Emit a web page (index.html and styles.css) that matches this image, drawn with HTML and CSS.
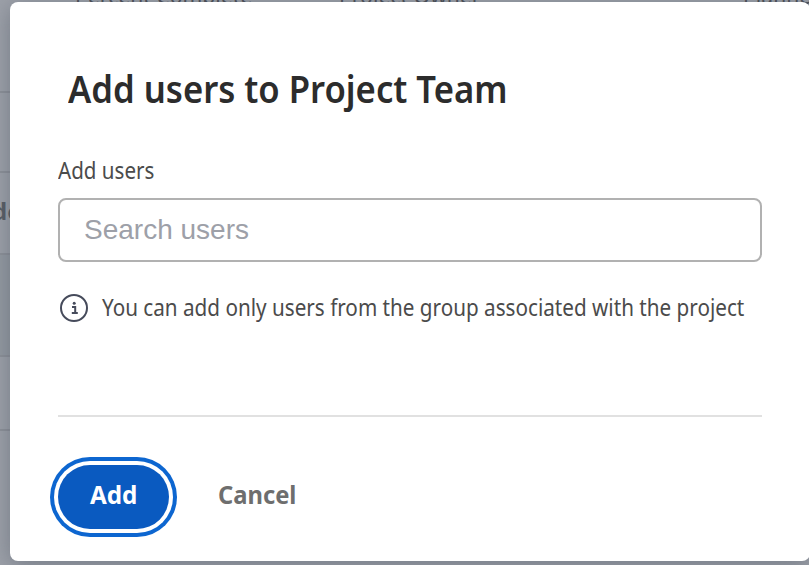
FILE: index.html
```html
<!DOCTYPE html>
<html lang="en">
<head>
<meta charset="utf-8">
<title>Add users to Project Team</title>
<link rel="stylesheet" href="styles.css">
</head>
<body>
<div class="page">
  <div class="columns"><span>Percent Complete</span><span>Project Owner</span><span>Planned</span></div>
  <div class="row row-a"></div>
  <div class="row row-b"></div>
  <div class="row row-c">de</div>
  <div class="row row-d"></div>
  <div class="row row-e"></div>
</div>
<main class="dialog" role="dialog" aria-labelledby="title">
  <h1 id="title"><span class="fit fit-title">Add users to Project Team</span></h1>
  <label for="users"><span class="fit fit-label">Add users</span></label>
  <input id="users" type="text" placeholder="Search users">
  <p class="info">
    <svg width="28" height="28" viewBox="0 0 28 28" fill="none" aria-hidden="true">
      <circle cx="14" cy="14" r="13" stroke="#464b5b" stroke-width="2"/>
      <circle cx="14.2" cy="9.2" r="1.5" fill="#464b5b"/>
      <path d="M12 13h3.2v5.5M11.8 19h6" stroke="#464b5b" stroke-width="2"/>
    </svg>
    <span class="fit fit-info">You can add only users from the group associated with the project</span>
  </p>
  <footer>
    <button class="add"><span class="fit fit-add">Add</span></button>
    <button class="cancel"><span class="fit fit-cancel">Cancel</span></button>
  </footer>
</main>
</body>
</html>
```
FILE: styles.css
```css
* { box-sizing: border-box; }
body {
  margin: 0;
  width: 809px;
  height: 565px;
  overflow: hidden;
  position: relative;
  background: #9da1a9;
  font-family: "Noto Sans", "Open Sans", sans-serif;
  color: #4b4b4b;
}
.page { height: 565px; color: #4d5057; }
.columns {
  display: grid;
  grid-template-columns: 264px 404px 100px;
  padding-left: 75px;
  height: 12px;
  font-size: 23px;
  line-height: 32px;
  white-space: nowrap;
}
.columns span { height: 32px; margin-top: -21px; transform: scaleX(.92); transform-origin: left; }
.row { border-bottom: 2px solid #8d9199; }
.row-a { height: 81px; }
.row-b { height: 80px; }
.row-c { height: 82px; margin-left: -8px; font-size: 24px; font-weight: 700; line-height: 76px; color: #595e66; }
.row-d { height: 102px; background: #949aa2; }
.row-e { height: 74px; }
.dialog {
  position: absolute;
  left: 10px;
  top: 2px;
  width: 800px;
  height: 559px;
  padding: 58px 48px 0;
  border-radius: 8px;
  background: #fff;
  box-shadow: 0 4px 24px rgba(55, 66, 81, .4);
}
.fit { display: inline-block; white-space: nowrap; transform-origin: left center; }
h1 {
  margin: 0;
  padding-left: 10px;
  height: 56px;
  font-size: 38px;
  font-weight: 600;
  line-height: 56px;
  color: #2c2c2c;
}
.fit-title { transform: scaleX(.912); }
label { display: block; height: 32px; margin-top: 38px; font-size: 23px; line-height: 32px; }
.fit-label { transform: scaleX(.895); }
input {
  display: block;
  width: 704px;
  height: 64px;
  margin-top: 12px;
  padding: 0 24px 1px;
  border: 2px solid #b1b1b1;
  border-radius: 8px;
  background: #fff;
  font: 28px "Liberation Sans", Arial, sans-serif;
}
input::placeholder { color: #9da0a8; opacity: 1; }
.info {
  display: flex;
  align-items: center;
  gap: 14px;
  height: 32px;
  margin: 30px 0 0;
  padding-left: 2px;
  font-size: 23px;
  line-height: 32px;
}
.info svg { flex: none; }
.fit-info { transform: translateY(-1px) scaleX(.899); }
footer {
  display: flex;
  align-items: center;
  gap: 49px;
  height: 114px;
  margin-top: 91px;
  padding-top: 48px;
  border-top: 2px solid #e1e1e1;
}
button {
  padding: 0;
  border: 0;
  background: none;
  font: 700 25px/60px "Noto Sans", "Open Sans", sans-serif;
}
.add {
  width: 111px;
  height: 64px;
  border-radius: 32px;
  padding: 0 0 6px 32px;
  text-align: left;
  background: #0a5ac0;
  color: #fff;
  box-shadow: 0 0 0 4px #fff, 0 0 0 8px #0d66d0;
}
.cancel { height: 64px; padding-bottom: 6px; color: #6e6e6e; }
.fit-add { transform: translateY(-1px) scaleX(.97); }
.fit-cancel { transform: translateY(-1px) scaleX(.95); }
```
